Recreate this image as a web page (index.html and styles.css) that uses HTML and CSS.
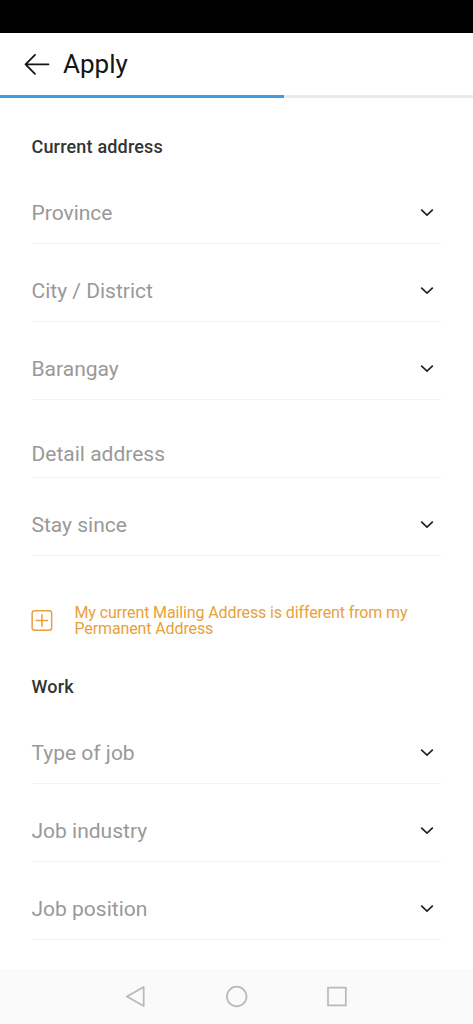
FILE: index.html
```html
<!DOCTYPE html>
<html lang="en">
<head>
<meta charset="utf-8">
<meta name="viewport" content="width=device-width">
<title>Apply</title>
<link rel="stylesheet" href="styles.css">
</head>
<body>
<div class="status"></div>
<header class="header">
<svg class="back" width="26" height="22" viewBox="0 0 26 22"><path d="M24.500 11.300H1.500M11 1.800L1.500 11.300L11 20.800"/></svg>
<h1 class="title">Apply</h1>
</header>
<div class="progress"><div class="progress-fill"></div></div>
<main class="form">
<h2 class="section">Current address</h2>
<div class="field"><span>Province</span><svg class="chevron" width="14" height="10" viewBox="0 0 14 10"><path d="M1.200 1.600L7 7.200L12.800 1.600"/></svg></div>
<div class="field"><span>City / District</span><svg class="chevron" width="14" height="10" viewBox="0 0 14 10"><path d="M1.200 1.600L7 7.200L12.800 1.600"/></svg></div>
<div class="field"><span>Barangay</span><svg class="chevron" width="14" height="10" viewBox="0 0 14 10"><path d="M1.200 1.600L7 7.200L12.800 1.600"/></svg></div>
<div class="field input"><span>Detail address</span></div>
<div class="field"><span>Stay since</span><svg class="chevron" width="14" height="10" viewBox="0 0 14 10"><path d="M1.200 1.600L7 7.200L12.800 1.600"/></svg></div>
<div class="mailing">
<svg width="21" height="21" viewBox="0.600 0 21 21"><rect x="0.750" y="0.750" width="19.500" height="19.500" rx="2.500"/><path d="M10.500 4.200V16.800M4.200 10.500H16.800"/></svg>
<p>My current Mailing Address is different from my<br>Permanent Address</p>
</div>
<h2 class="section">Work</h2>
<div class="field"><span>Type of job</span><svg class="chevron" width="14" height="10" viewBox="0 0 14 10"><path d="M1.200 1.600L7 7.200L12.800 1.600"/></svg></div>
<div class="field"><span>Job industry</span><svg class="chevron" width="14" height="10" viewBox="0 0 14 10"><path d="M1.200 1.600L7 7.200L12.800 1.600"/></svg></div>
<div class="field"><span>Job position</span><svg class="chevron" width="14" height="10" viewBox="0 0 14 10"><path d="M1.200 1.600L7 7.200L12.800 1.600"/></svg></div>
</main>
<nav class="nav">
<svg width="22" height="24" viewBox="0 0 22 24"><path d="M17.700 2V21L0.900 11.500Z"/></svg>
<svg width="22" height="24" viewBox="0 0 22 24"><circle cx="10.700" cy="11.500" r="9.800"/></svg>
<svg width="22" height="24" viewBox="0 0 22 24"><rect x="2" y="2.600" width="17.800" height="17.800"/></svg>
</nav>
</body>
</html>
```
FILE: styles.css
```css
* { box-sizing: border-box; }
body { margin: 0; height: 1024px; display: flex; flex-direction: column; overflow: hidden; background: #fff; font-family: Roboto, sans-serif; }
svg { fill: none; flex: none; stroke-linejoin: round; overflow: visible; }
.status { height: 33px; background: #000; }
.header { height: 62px; display: flex; align-items: center; gap: 13.500px; padding: 0 23.500px; }
.back { stroke: #151515; stroke-width: 1.8; stroke-linecap: round; }
.title { margin: 0; font-size: 26px; font-weight: 400; line-height: 32px; color: #151515; }
.progress { height: 3px; background: #ebebeb; }
.progress-fill { width: 284px; height: 3px; background: #409ee0; }
.form { flex: 1; padding: 36px 32px 0 31.500px; }
.section { margin: 0; height: 32px; font-size: 18px; font-weight: 500; line-height: 26px; letter-spacing: 0.180px; color: #333; }
.field { height: 78px; display: flex; align-items: center; justify-content: space-between; padding: 16px 7px 0 0; border-bottom: 1px solid #f3f3f3; font-size: 21px; line-height: 28px; color: #999; }
.input { padding-top: 30px; }
.chevron { stroke: #202020; stroke-width: 1.6; }
.mailing { display: flex; align-items: center; gap: 22px; margin: 48px 0 38px; height: 32px; color: #e8a13a; }
.mailing svg { stroke: #e8a13a; stroke-width: 1.5; }
.mailing p { margin: 0; padding-top: 2px; font-size: 16px; line-height: 16px; letter-spacing: -0.12px; white-space: nowrap; }
.nav { height: 55px; display: flex; justify-content: center; align-items: center; gap: 78px; background: #fafafa; }
.nav svg { stroke: #b8b8b8; stroke-width: 1.7; }
```
